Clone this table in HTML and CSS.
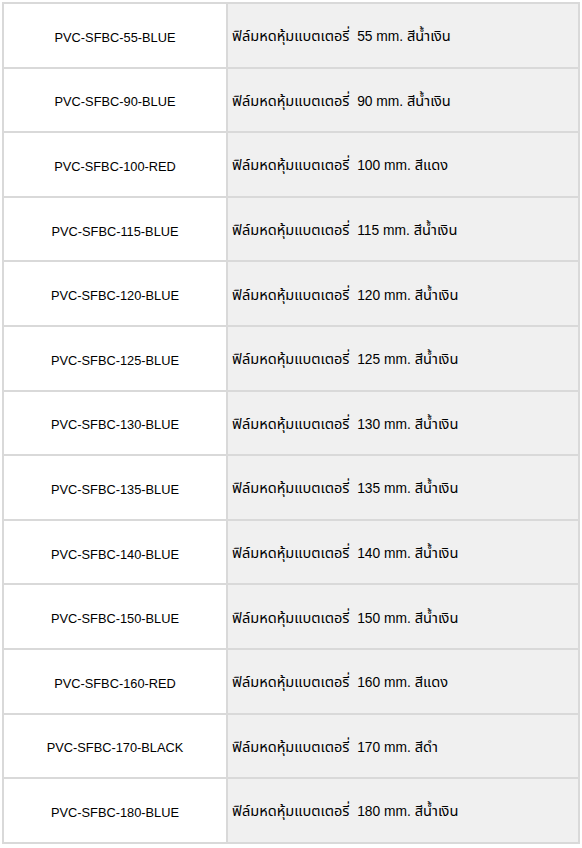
FILE: index.html
```html
<!DOCTYPE html>
<html lang="th">
<head>
<meta charset="utf-8">
<link rel="stylesheet" href="styles.css">
</head>
<body>
<table class="list">
<tbody>
<tr><td class="code">PVC-SFBC-55-BLUE</td><td class="desc"><span class="th">ฟิล์มหดหุ้มแบตเตอรี่</span>&nbsp; 55 mm. <span class="th">สีน้ำเงิน</span></td></tr>
<tr><td class="code">PVC-SFBC-90-BLUE</td><td class="desc"><span class="th">ฟิล์มหดหุ้มแบตเตอรี่</span>&nbsp; 90 mm. <span class="th">สีน้ำเงิน</span></td></tr>
<tr><td class="code">PVC-SFBC-100-RED</td><td class="desc"><span class="th">ฟิล์มหดหุ้มแบตเตอรี่</span>&nbsp; 100 mm. <span class="th">สีแดง</span></td></tr>
<tr><td class="code">PVC-SFBC-115-BLUE</td><td class="desc"><span class="th">ฟิล์มหดหุ้มแบตเตอรี่</span>&nbsp; 115 mm. <span class="th">สีน้ำเงิน</span></td></tr>
<tr><td class="code">PVC-SFBC-120-BLUE</td><td class="desc"><span class="th">ฟิล์มหดหุ้มแบตเตอรี่</span>&nbsp; 120 mm. <span class="th">สีน้ำเงิน</span></td></tr>
<tr><td class="code">PVC-SFBC-125-BLUE</td><td class="desc"><span class="th">ฟิล์มหดหุ้มแบตเตอรี่</span>&nbsp; 125 mm. <span class="th">สีน้ำเงิน</span></td></tr>
<tr><td class="code">PVC-SFBC-130-BLUE</td><td class="desc"><span class="th">ฟิล์มหดหุ้มแบตเตอรี่</span>&nbsp; 130 mm. <span class="th">สีน้ำเงิน</span></td></tr>
<tr><td class="code">PVC-SFBC-135-BLUE</td><td class="desc"><span class="th">ฟิล์มหดหุ้มแบตเตอรี่</span>&nbsp; 135 mm. <span class="th">สีน้ำเงิน</span></td></tr>
<tr><td class="code">PVC-SFBC-140-BLUE</td><td class="desc"><span class="th">ฟิล์มหดหุ้มแบตเตอรี่</span>&nbsp; 140 mm. <span class="th">สีน้ำเงิน</span></td></tr>
<tr><td class="code">PVC-SFBC-150-BLUE</td><td class="desc"><span class="th">ฟิล์มหดหุ้มแบตเตอรี่</span>&nbsp; 150 mm. <span class="th">สีน้ำเงิน</span></td></tr>
<tr><td class="code">PVC-SFBC-160-RED</td><td class="desc"><span class="th">ฟิล์มหดหุ้มแบตเตอรี่</span>&nbsp; 160 mm. <span class="th">สีแดง</span></td></tr>
<tr><td class="code">PVC-SFBC-170-BLACK</td><td class="desc"><span class="th">ฟิล์มหดหุ้มแบตเตอรี่</span>&nbsp; 170 mm. <span class="th">สีดำ</span></td></tr>
<tr><td class="code">PVC-SFBC-180-BLUE</td><td class="desc"><span class="th">ฟิล์มหดหุ้มแบตเตอรี่</span>&nbsp; 180 mm. <span class="th">สีน้ำเงิน</span></td></tr>
</tbody>
</table>
</body>
</html>
```
FILE: styles.css
```css
html, body {
  margin: 0;
  padding: 0;
  background: #ffffff;
}
body {
  font-family: Tahoma, "Liberation Sans", "Noto Sans Thai", "Noto Sans", sans-serif;
  font-size: 12.8px;
  color: #000;
}
.list {
  margin: 2px 0 0 2px;
  width: 578px;
  border-collapse: collapse;
  table-layout: fixed;
}
.list tr {
  height: 64.6px;
}
.list td {
  border: 2px solid #d9d9d9;
  padding: 4px 4px 0;
  vertical-align: middle;
}
.list .code {
  width: 214px;
  text-align: center;
  background: #ffffff;
}
.list .desc {
  background: #f0f0f0;
  text-align: left;
  font-size: 13.8px;
}
.th {
  font-size: 14.6px;
}
```
